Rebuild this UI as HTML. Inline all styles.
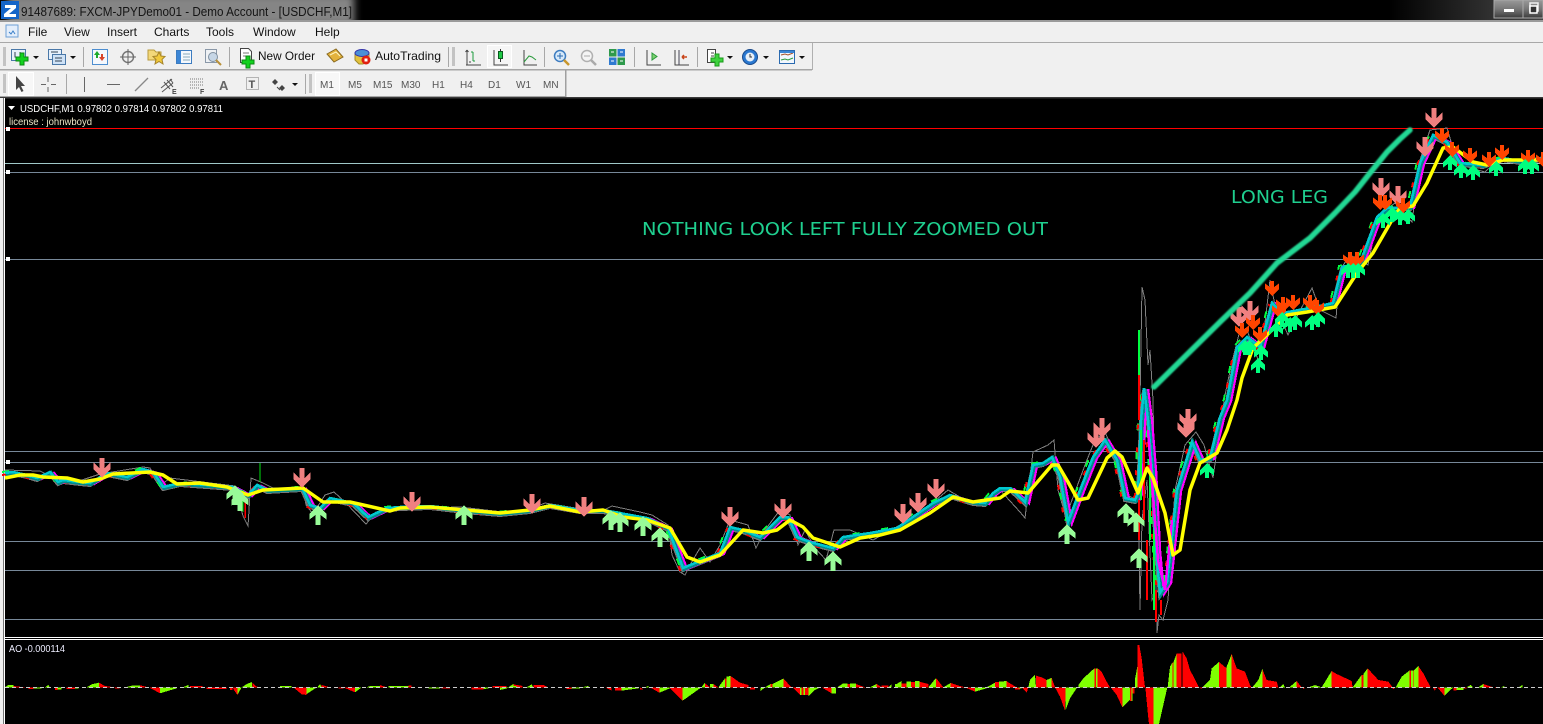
<!DOCTYPE html>
<html><head><meta charset="utf-8"><title>MT4 USDCHF</title>
<style>html,body{margin:0;padding:0;background:#000;overflow:hidden}svg{display:block}
text{font-family:"Liberation Sans",sans-serif}</style></head><body>
<svg xmlns="http://www.w3.org/2000/svg" width="1543" height="724" viewBox="0 0 1543 724">
<defs>
<filter id="b1" x="-20%" y="-100%" width="140%" height="300%"><feGaussianBlur stdDeviation="4"/></filter>
<filter id="b2" x="-5%" y="-5%" width="110%" height="110%"><feGaussianBlur stdDeviation=".8"/></filter>
<linearGradient id="tg" x1="0" x2="1" y1="0" y2="0"><stop offset="0" stop-color="#000"/><stop offset=".9" stop-color="#000"/><stop offset=".97" stop-color="#333"/><stop offset="1" stop-color="#444"/></linearGradient>
<linearGradient id="bg" x1="0" x2="0" y1="0" y2="1"><stop offset="0" stop-color="#9a9a9a"/><stop offset=".5" stop-color="#777"/><stop offset="1" stop-color="#3c3c3c"/></linearGradient>
<path id="pd" fill="#f08080" d="M-2.5 0H2.5V10L8.500 4.500V11L0 20L-8.500 11V4.500L-2.500 10Z"/>
<path id="gu" fill="#98fb98" d="M-2.500 20H2.500V10L8.500 14.500V9L0 0L-8.500 9V14.500L-2.500 10Z"/>
<path id="od" fill="#ff4500" d="M-2 0H2V6L7 2.500V8L0 15L-7 8V2.500L-2 6Z"/>
<path id="su" fill="#00ff7f" d="M-2 15H2V9L7 12.500V7L0 0L-7 7V12.500L-2 9Z"/>
<polyline id="rib" fill="none" points="5,473 13,472 27,475 37,478 50,472 58,482 63,480 80,482 90,483 107,473 127,477 143,469 153,472 163,487 180,483 233,487 248,495 257,485 267,490 302,488 310,505 320,508 330,498 353,503 368,517 387,508 400,507 430,506 465,510 500,513 530,510 550,505 580,510 603,510 647,518 668,528 683,568 695,563 720,553 730,527 743,530 760,537 780,517 788,517 797,537 810,542 833,548 843,537 870,533 897,528 933,503 950,495 973,502 985,503 993,493 1000,488 1010,488 1025,502 1033,465 1043,463 1052,457 1060,477 1068,522 1080,490 1093,457 1105,440 1117,460 1125,498 1135,500 1138,493 1141,420 1144,388 1148,420 1152,470 1156,550 1160,593 1167,582 1177,490 1192,442 1200,460 1210,458 1220,417 1227,400 1237,347 1247,337 1260,347 1272,303 1282,313 1310,308 1333,303 1342,267 1360,263 1377,217 1387,208 1410,207 1420,163 1433,135 1447,142 1460,163 1483,165 1503,158 1520,161 1543,158"/>
</defs>

<!-- title bar -->
<rect width="1543" height="20" fill="url(#tg)"/>
<svg x="0" y="0" width="1543" height="20"><rect x="8" y="-6" width="346" height="32" fill="#858585" filter="url(#b1)"/></svg>
<rect x="1" y="1" width="18" height="18" fill="#1565c8"/>
<path d="M5 5H16V8L9 14H16V17H4V14L11 8H5Z" fill="#fff"/>
<text x="21" y="16" font-size="13" fill="#141414" textLength="331" lengthAdjust="spacingAndGlyphs">91487689: FXCM-JPYDemo01 - Demo Account - [USDCHF,M1]</text>
<rect x="1494" y="0" width="29" height="18" fill="url(#bg)" stroke="#aaa"/>
<rect x="1523" y="0" width="20" height="18" fill="url(#bg)" stroke="#aaa"/>
<rect x="1504" y="9" width="10" height="3" fill="#fff"/>
<rect x="1530" y="3" width="8" height="8" fill="none" stroke="#eee" stroke-width="1.500"/>
<rect x="1530" y="6" width="7" height="7" fill="#333" stroke="#fff" stroke-width="1.500"/>
<rect y="20" width="1543" height="2" fill="#9a9a9a"/>

<!-- menu + toolbars bg -->
<rect y="22" width="1543" height="76" fill="#f0f0f0"/>
<rect y="42" width="1543" height="1" fill="#a8a8a8"/>
<rect y="69" width="812" height="1.500" fill="#a6a6a6"/><rect x="812" y="43" width="1" height="27" fill="#b0b0b0"/>
<rect y="96" width="566" height="1" fill="#a6a6a6"/><rect x="565" y="70" width="1.500" height="27" fill="#a0a0a0"/>

<!-- menu -->
<rect x="6" y="25" width="12" height="12" fill="#e3eefb" stroke="#6d9fd6"/>
<path d="M9 32l2 2 2-3 2 3" fill="none" stroke="#3a7fc8"/>
<g font-size="12" fill="#111">
<text x="28" y="36">File</text><text x="64" y="36">View</text><text x="107" y="36">Insert</text><text x="154" y="36">Charts</text><text x="206" y="36">Tools</text><text x="253" y="36">Window</text><text x="315" y="36">Help</text>
</g>

<!-- grips / separators -->
<g fill="#b8b8b8">
<rect x="3" y="47" width="3" height="19" opacity=".8"/><rect x="3" y="74" width="3" height="19" opacity=".8"/>
<rect x="452" y="47" width="3" height="19" opacity=".8"/><rect x="309" y="74" width="3" height="19" opacity=".8"/>
</g>
<g fill="#a8a8a8">
<rect x="83" y="47" width="1" height="20"/><rect x="229" y="47" width="1" height="20"/><rect x="448" y="47" width="1" height="20"/>
<rect x="544" y="47" width="1" height="20"/><rect x="634" y="47" width="1" height="20"/><rect x="697" y="47" width="1" height="20"/>
<rect x="66" y="74" width="1" height="20"/><rect x="305" y="74" width="1" height="20"/>
</g>

<!-- row1 icons -->
<g stroke-width="1">
<rect x="11.500" y="49.500" width="14" height="11" fill="#e6f0fb" stroke="#4a78a8"/><path d="M15 52v5h3M20 52v3" fill="none" stroke="#345"/>
<path d="M20 53h4v4h4v4h-4v4h-4v-4h-4v-4h4z" fill="#12d21e" stroke="#0a8a12"/>
<path d="M33 56h6l-3 3z" fill="#111"/>
<rect x="48.500" y="49.500" width="13" height="10" fill="#e6f0fb" stroke="#4a78a8"/><rect x="52.500" y="54.500" width="13" height="10" fill="#cfe2f6" stroke="#4a78a8"/><path d="M51 52h7M55 58h7M55 61h7" stroke="#345" fill="none"/>
<path d="M70 56h6l-3 3z" fill="#111"/>
<rect x="92.500" y="49.500" width="15" height="15" fill="#f4f8fd" stroke="#4d8ed0"/><path d="M97 51l3 4h-2v3h-2v-3h-2z" fill="#1caa2c"/><path d="M102 61l-3-4h2v-3h2v3h2z" fill="#d8452a"/>
<circle cx="128" cy="57" r="5.500" fill="none" stroke="#777" stroke-width="1.500"/><path d="M128 49v16M120 57h16" stroke="#666" fill="none"/>
<path d="M148 50h6l2 2h5v8h-13z" fill="#f3d87a" stroke="#b89a3c"/><path d="M159 52l2 4 4 .5-3 3 1 4.500-4-2.500-4 2.500 1-4.500-3-3 4-.5z" fill="#f1c93c" stroke="#a5842a"/>
<rect x="176.500" y="50.500" width="15" height="13" fill="#f4f8fd" stroke="#3c7cc0"/><rect x="177" y="51" width="4" height="12" fill="#3c86d6"/><path d="M183 54h7M183 57h7M183 60h7" stroke="#8ab" fill="none"/>
<rect x="205.500" y="49.500" width="11" height="13" fill="#eef1f4" stroke="#8a98a8"/><circle cx="213" cy="57" r="4.500" fill="#c6d6e6" stroke="#8090a0"/><path d="M216 60l5 5" stroke="#b9913a" stroke-width="2"/>
<path d="M240.500 48.500h8l3 3v11h-11z" fill="#fff" stroke="#444"/><path d="M243 53h6M243 56h6" stroke="#777"/>
<path d="M246 56h4v4h4v4h-4v4h-4v-4h-4v-4h4z" fill="#12d21e" stroke="#0a8a12"/>
<path d="M327 54l9-5 7 8-9 5z" fill="#e3b23c" stroke="#8a6a20"/><path d="M330 55l6-3 4 4" stroke="#fff4c0" fill="none"/>
<path d="M355 53c2-4 12-4 14 0v7l-6 4h-4l-4-4z" fill="#e3c23c" stroke="#a08a2a"/><ellipse cx="362" cy="53" rx="7" ry="3.500" fill="#4a90d6" stroke="#33a"/><circle cx="366" cy="60" r="4.500" fill="#e02010"/><rect x="364.500" y="58.500" width="3" height="3" fill="#fff"/>
</g>
<text x="258" y="60" font-size="12" fill="#111" textLength="57" lengthAdjust="spacingAndGlyphs">New Order</text>
<text x="375" y="60" font-size="12" fill="#111" textLength="66" lengthAdjust="spacingAndGlyphs">AutoTrading</text>

<!-- chart type icons -->
<rect x="487.500" y="45.500" width="24" height="22" fill="#f6f6f6" stroke="#fff"/>
<g fill="none" stroke="#444">
<path d="M467 50v15h14M470 63v-2M467 65h-1"/><path d="M473 52h-2M473 52v9M473 61h2" stroke="#1d9a3c" />
<path d="M467 50l-1.500 2M467 50l1.500 2"/>
<path d="M494 50v15h14"/><rect x="498.500" y="51.500" width="4" height="7" fill="#1ec845" stroke="#0a5a1e"/><path d="M500.500 49v2M500.500 59v3" stroke="#333"/>
<path d="M524 50v15h13"/><path d="M524 62l5-6 3 1 4 3" stroke="#2a9a3c"/>
<circle cx="560" cy="56" r="5.500" fill="#d8eafa" stroke="#3c7cc0" stroke-width="1.500"/><path d="M557 56h6M560 53v6" stroke="#2a6ab0"/><path d="M564 60l5 5" stroke="#c8962c" stroke-width="2.500"/>
<circle cx="587" cy="56" r="5.500" fill="#f4f4f4" stroke="#b0b0b0" stroke-width="1.500"/><path d="M584 56h6" stroke="#aaa"/><path d="M591 60l5 5" stroke="#aaa" stroke-width="2.500"/>
</g>
<rect x="609" y="49" width="7.500" height="7.500" fill="#2f9a4c"/><rect x="617.500" y="49" width="7.500" height="7.500" fill="#2f7ad0"/><rect x="609" y="57.500" width="7.500" height="7.500" fill="#2f7ad0"/><rect x="617.500" y="57.500" width="7.500" height="7.500" fill="#2f9a4c"/>
<path d="M611 52h3M620 52h3M611 61h3M620 61h3" stroke="#fff"/>
<g fill="none" stroke="#444">
<path d="M647 50v15h14"/><path d="M652 53l5 3.500-5 3.500z" fill="#7ed070" stroke="#2a9a3c"/>
<path d="M675 50v15h14"/><path d="M679 50v15" stroke="#445"/><path d="M687 57h-5M682 57l2-2M682 57l2 2" stroke="#c8451a" stroke-width="1.500"/>
<path d="M707.500 49.500h8v13h-8z" fill="#fff"/><path d="M711 53h3M711 56h3"/>
<path d="M716 57h4v4h4v4h-4v4h-4v-4h-4v-4h4z" transform="translate(-1,-3)" fill="#3ed23e" stroke="#1a9a1a"/>
</g>
<path d="M727 56h6l-3 3z" fill="#111"/>
<circle cx="750" cy="57" r="7.500" fill="#2a78d0" stroke="#1a4a8a"/><circle cx="750" cy="57" r="4.500" fill="#e8f0f8"/><path d="M750 54v3h2" stroke="#333" fill="none"/>
<path d="M763 56h6l-3 3z" fill="#111"/>
<rect x="779.500" y="50.500" width="15" height="13" fill="#f2f7fd" stroke="#2a6ab0"/><path d="M781 55l4-1 3 1 5-2" stroke="#a5522a" fill="none"/><path d="M781 60l4-1 3 1 5-2" stroke="#2a9a3c" fill="none"/><rect x="780" y="51" width="14" height="2" fill="#3c86d6"/>
<path d="M799 56h6l-3 3z" fill="#111"/>

<!-- row 2 -->
<rect x="8.500" y="72.500" width="25" height="23" fill="#f7f7f7" stroke="#fff"/>
<path d="M16 76v14l3-3 2.500 5 2-1-2.500-5h4z" fill="#444"/>
<path d="M48 77v5M48 87v5M41 84.500h5M51 84.500h5" stroke="#666" fill="none"/>
<path d="M84.500 77v15" stroke="#666"/><path d="M107 84.500h13" stroke="#666"/><path d="M135 91l13-13" stroke="#888" stroke-width="1.300"/>
<path d="M161 88l11-9M162 92l11-9M164 82l6 7M167 80l6 7M170 79l3 4" stroke="#555" fill="none"/>
<text x="172" y="94" font-size="7" font-weight="bold" fill="#444">E</text>
<path d="M190 79h14M190 82h14M190 85h14M190 88h10" stroke="#777" stroke-dasharray="1 1" fill="none"/>
<text x="200" y="94" font-size="7" font-weight="bold" fill="#444">F</text>
<text x="219" y="90" font-size="13" font-weight="bold" fill="#666">A</text>
<rect x="246.500" y="77.500" width="12" height="12" fill="none" stroke="#777" stroke-dasharray="1 1"/>
<text x="248.500" y="88" font-size="11" font-weight="bold" fill="#555">T</text>
<path d="M275 79l3 3-3 3-3-3zM282 85l3 3-3 3-3-3z" fill="#444"/><path d="M277 87l3 3" stroke="#444"/>
<path d="M292 83h6l-3 3z" fill="#111"/>
<rect x="315.500" y="72.500" width="24" height="23" fill="#f7f7f7" stroke="#fff"/>
<g font-size="10" fill="#555">
<text x="320" y="88">M1</text><text x="348" y="88">M5</text><text x="373" y="88">M15</text><text x="401" y="88">M30</text><text x="432" y="88">H1</text><text x="460" y="88">H4</text><text x="488" y="88">D1</text><text x="516" y="88">W1</text><text x="543" y="88">MN</text>
</g>

<!-- chart frame -->
<rect x="0" y="97" width="1543" height="1.500" fill="#3a3a3a"/>
<rect x="0" y="98" width="5" height="626" fill="#f0f0f0"/>
<rect x="3" y="98" width="1" height="626" fill="#777"/>
<rect x="4" y="98" width="1" height="626" fill="#fff"/>
<rect x="5" y="99" width="1538" height="538" fill="#000"/>
<rect x="5" y="640" width="1538" height="84" fill="#000"/>
<rect x="4" y="637" width="1539" height="1" fill="#fff"/>
<rect x="4" y="639" width="1539" height="1" fill="#fff"/>

<g shape-rendering="crispEdges">
<path d="M5 172.500H1543M5 259.500H1543M5 451.500H1543M5 462.500H1543M5 541.500H1543M5 570.500H1543M5 619.500H1543" stroke="#778899" fill="none"/>
<path d="M5 163.500H1543" stroke="#9fc8c8" fill="none"/>
<path d="M5 128.500H1543" stroke="#ff0000" fill="none"/>
<rect x="6" y="127" width="4" height="4" fill="#fff"/><rect x="6" y="170" width="4" height="4" fill="#fff"/><rect x="6" y="257" width="4" height="4" fill="#fff"/><rect x="6" y="460" width="4" height="4" fill="#fff"/>
</g>

<!-- price: thin grey envelope -->
<polyline shape-rendering="crispEdges" fill="none" stroke="#808080" points="5,470 40,471 58,480 70,484 100,474 143,467 150,468 160,486 170,478 235,486 243,516 248,526 251,478 263,483 273,488 303,488 306,505 313,514 325,495 334,492 345,502 366,524 376,512 390,509 460,507 520,514 545,503 600,512 612,506 640,512 652,515 668,525 672,555 680,572 685,575 690,565 700,548 710,562 720,545 730,520 748,525 756,548 765,530 780,510 790,515 798,545 805,530 815,548 826,560 834,530 850,530 873,540 900,525 930,505 948,490 960,497 975,505 1000,490 1020,512 1025,518 1033,452 1048,445 1054,440 1058,490 1066,517 1072,500 1085,465 1095,440 1105,432 1115,455 1126,495 1138,500 1140,400 1142,287 1145,300 1148,365 1150,350 1153,400 1155,520 1157,633 1159,615 1163,620 1168,600 1175,490 1185,445 1196,432 1204,445 1213,478 1217,450 1225,395 1232,362 1240,330 1247,330 1260,365 1270,280 1275,305 1288,335 1295,320 1312,288 1320,310 1336,318 1340,270 1350,255 1368,265 1378,215 1395,203 1412,222 1420,160 1430,130 1447,128 1455,155 1470,168 1485,172 1500,158 1525,165 1543,156"/>
<polyline shape-rendering="crispEdges" fill="none" stroke="#808080" points="1135,500 1138,480 1140,610 1142,520 1147,480 1152,600 1158,590"/>

<!-- ribbon -->
<g shape-rendering="crispEdges">
<use href="#rib" transform="translate(0,2)" stroke="#777" stroke-width="4"/>
<use href="#rib" transform="translate(-3,-1)" stroke="#00ff40" stroke-width="2" stroke-dasharray="7 22"/>
<use href="#rib" transform="translate(-3,2)" stroke="#ff0000" stroke-width="2" stroke-dasharray="5 18"/>
<use href="#rib" transform="translate(4,1)" stroke="#ff00ff" stroke-width="2.500"/>
<use href="#rib" transform="translate(1,1)" stroke="#008b8b" stroke-width="4"/>
<use href="#rib" stroke="#00c8d0" stroke-width="2.500"/>
<path d="M1139 375V420M1139 500V540M1156 590V622M1147 540V600M1144 440V520M1161 600V615" stroke="#ff0000" stroke-width="2" fill="none"/>
<path d="M1139 330V375M1141 430V500M1154 530V610M1150 470V540" stroke="#00ff40" stroke-width="2" fill="none"/>
<path d="M1148 430L1158 560L1165 590L1172 520" stroke="#ff00ff" stroke-width="2.500" fill="none"/>
<path d="M260 463V482M243 490V512" stroke="#00e010" fill="none"/>
<path d="M245 500V518" stroke="#ff0000" stroke-width="1.500" fill="none"/>
</g>

<!-- yellow MA -->
<polyline fill="none" stroke="#ffff00" stroke-width="3.500" stroke-linejoin="round" points="5,478 20,475 33,475 43,477 67,478 83,482 100,479 113,474 150,472 163,475 177,484 200,483 227,487 248,495 263,490 303,488 323,502 350,502 390,511 400,508 430,507 465,510 500,513 530,510 550,506 580,512 603,510 623,517 647,520 670,528 687,557 700,562 720,555 743,530 763,533 777,530 790,520 803,527 813,538 840,547 860,538 880,535 900,530 930,513 953,497 973,502 1000,498 1010,491 1028,493 1052,465 1058,465 1068,482 1078,500 1088,498 1107,458 1115,451 1122,457 1138,493 1147,468 1153,478 1165,513 1173,555 1180,550 1190,490 1200,463 1217,453 1227,430 1237,400 1242,378 1253,348 1270,332 1287,315 1307,312 1335,307 1357,273 1373,253 1392,220 1400,208 1413,206 1427,183 1443,148 1453,147 1473,162 1487,165 1503,160 1543,160"/>

<!-- arrows -->
<g shape-rendering="crispEdges">
<use href="#pd" x="102" y="458"/><use href="#pd" x="302" y="468"/><use href="#pd" x="412" y="492"/><use href="#pd" x="532" y="494"/><use href="#pd" x="584" y="497"/><use href="#pd" x="730" y="507"/><use href="#pd" x="783" y="499"/><use href="#pd" x="903" y="504"/><use href="#pd" x="918" y="493"/><use href="#pd" x="936" y="479"/><use href="#pd" x="1096" y="428"/><use href="#pd" x="1102" y="418"/><use href="#pd" x="1186" y="418"/><use href="#pd" x="1188" y="409"/><use href="#pd" x="1239" y="307"/><use href="#pd" x="1250" y="301"/><use href="#pd" x="1381" y="178"/><use href="#pd" x="1398" y="186"/><use href="#pd" x="1425" y="137"/><use href="#pd" x="1434" y="108"/>
<use href="#gu" x="235" y="485"/><use href="#gu" x="240" y="491"/><use href="#gu" x="318" y="505"/><use href="#gu" x="464" y="505"/><use href="#gu" x="611" y="510"/><use href="#gu" x="620" y="512"/><use href="#gu" x="643" y="516"/><use href="#gu" x="660" y="527"/><use href="#gu" x="809" y="541"/><use href="#gu" x="833" y="551"/><use href="#gu" x="1067" y="524"/><use href="#gu" x="1126" y="503"/><use href="#gu" x="1136" y="512"/><use href="#gu" x="1139" y="548"/>
<use href="#od" x="1272" y="281"/><use href="#od" x="1242" y="323"/><use href="#od" x="1253" y="315"/><use href="#od" x="1260" y="327"/><use href="#od" x="1279" y="303"/><use href="#od" x="1283" y="297"/><use href="#od" x="1293" y="295"/><use href="#od" x="1310" y="295"/><use href="#od" x="1317" y="300"/><use href="#od" x="1350" y="252"/><use href="#od" x="1357" y="252"/><use href="#od" x="1380" y="195"/><use href="#od" x="1385" y="195"/><use href="#od" x="1403" y="198"/><use href="#od" x="1442" y="128"/><use href="#od" x="1452" y="142"/><use href="#od" x="1470" y="148"/><use href="#od" x="1489" y="152"/><use href="#od" x="1502" y="145"/><use href="#od" x="1528" y="150"/><use href="#od" x="1543" y="152"/>
<use href="#su" x="1207" y="463"/><use href="#su" x="1258" y="358"/><use href="#su" x="1245" y="340"/><use href="#su" x="1249" y="340"/><use href="#su" x="1261" y="345"/><use href="#su" x="1276" y="322"/><use href="#su" x="1282" y="312"/><use href="#su" x="1290" y="317"/><use href="#su" x="1295" y="315"/><use href="#su" x="1312" y="315"/><use href="#su" x="1318" y="312"/><use href="#su" x="1348" y="263"/><use href="#su" x="1353" y="263"/><use href="#su" x="1358" y="263"/><use href="#su" x="1383" y="213"/><use href="#su" x="1392" y="207"/><use href="#su" x="1400" y="210"/><use href="#su" x="1408" y="209"/><use href="#su" x="1450" y="155"/><use href="#su" x="1461" y="163"/><use href="#su" x="1473" y="165"/><use href="#su" x="1496" y="161"/><use href="#su" x="1525" y="159"/><use href="#su" x="1532" y="159"/>
</g>

<!-- drawn line & labels -->
<polyline fill="none" stroke="#22d894" stroke-width="5.500" stroke-linecap="round" stroke-linejoin="round" filter="url(#b2)" points="1154,387 1220,322 1250,293 1277,263 1310,238 1335,213 1355,192 1370,173 1387,152 1400,139 1410,130"/>
<text x="642" y="235" font-size="18" style="font-family:'DejaVu Sans',sans-serif" fill="#1fcf8f" textLength="406" lengthAdjust="spacingAndGlyphs">NOTHING LOOK LEFT FULLY ZOOMED OUT</text>
<text x="1231" y="203" font-size="18" style="font-family:'DejaVu Sans',sans-serif" fill="#1fcf8f" textLength="97" lengthAdjust="spacingAndGlyphs">LONG LEG</text>
<path d="M8 106h7l-3.500 4z" fill="#fff"/>
<text x="20" y="112" font-size="10" fill="#fff" textLength="203" lengthAdjust="spacingAndGlyphs">USDCHF,M1  0.97802 0.97814 0.97802 0.97811</text>
<text x="9" y="125" font-size="10" fill="#eee8c8" textLength="83" lengthAdjust="spacingAndGlyphs">license : johnwboyd</text>
<text x="9" y="652" font-size="10" fill="#eef" textLength="56" lengthAdjust="spacingAndGlyphs">AO -0.000114</text>

<!-- AO histogram -->
<g shape-rendering="crispEdges">
<g transform="translate(0,630) scale(.33333)">
<path fill="#7fff00" d="M14 172L25 165H40V172ZM100 172H125V176H100ZM135 172L145 165L150 172ZM172 172H185V178H172ZM225 172H235V176H225ZM260 172L275 163L297 158V172ZM375 172L400 166H420V172ZM480 172V190L530 175V172ZM548 172L565 165V172ZM712 172V195L725 172ZM725 172L740 162L755 156L757 172ZM840 172H875V168H840ZM920 172V192L950 172ZM952 172L960 162L965 172ZM1065 172V187L1085 172ZM1100 172L1110 168H1140V172ZM1165 172V168H1225V172ZM1285 172H1320V176H1285ZM1450 172V178L1480 172ZM1525 172L1540 162V172Z"/>
<path fill="#ff0000" d="M40 168L75 172H40ZM85 172H100V177H85ZM165 172H172V180H165ZM200 172H225V177H200ZM297 158L315 168L345 172H297ZM345 172H358V176H345ZM420 166L445 172H420ZM447 172L480 190V172ZM570 172V168H608V172ZM620 172H680V177H620ZM690 172H697V180H690ZM697 172L712 195V172ZM757 158L770 170L785 172H757ZM880 172L905 193L920 195V172ZM965 165L990 172H965ZM1015 172H1030V176H1015ZM1030 172L1065 187V172ZM1140 165L1160 172H1140ZM1225 166H1235V172H1225ZM1325 172H1350V176H1325ZM1415 172H1450V179H1415ZM1478 172V168H1520V172ZM1540 163L1568 168V172H1540Z"/>
</g>
<g transform="translate(500,660) scale(.33333)">
<path fill="#7fff00" d="M0 82V90L10 88L30 82ZM35 82V78H50V82ZM80 82L95 73L100 82ZM215 82H240V86H215ZM245 82L265 78V82ZM365 82V92L415 85V82ZM435 82L445 78V82ZM478 82V98L510 85V82ZM548 82V122L600 85L604 82ZM604 82L615 68V82ZM630 82V72H640V82ZM655 82L675 55V82ZM680 82V50L692 48V82ZM782 82V93L795 82ZM795 82L812 72V82ZM818 82V72L850 56V82ZM900 82V105H905V82ZM910 82V105H915V82ZM925 82V110L945 90L960 82ZM995 82V100H1008V82ZM1012 82L1030 70H1043V82ZM1050 82V70H1068V82ZM1110 82L1130 72V82ZM1165 82L1175 72V82ZM1185 82V72H1190L1205 63V82ZM1220 82V65H1233V82ZM1245 82V63H1258V82ZM1285 82L1308 54V82ZM1330 82L1352 69V82ZM1425 82V95L1460 85V82ZM1460 82L1485 68V82ZM1497 82V64H1520V82Z"/>
<path fill="#ff0000" d="M100 75H130L145 82H100ZM200 82H215V87H200ZM315 82L335 92V82ZM345 82H365V92H345ZM420 82V88H430ZM450 82L478 98V82ZM507 82L548 122V82ZM615 70L630 82H615ZM640 72L655 82H640ZM675 55H680V82H675ZM692 48L720 68L745 75V82H692ZM750 82H765V88H750ZM812 72H818V82H812ZM850 56L875 82H850ZM878 82L900 105V82ZM905 82V105H910V82ZM915 82V105H925V82ZM965 82L995 100V82ZM1043 72H1050V82H1043ZM1068 72L1095 82H1068ZM1130 72L1145 82H1130ZM1145 76H1165V82H1145ZM1205 70H1220V82H1205ZM1233 66H1245V82H1233ZM1258 65L1285 72V82H1258ZM1308 54L1330 82H1308ZM1352 69L1380 78L1395 82H1352ZM1395 82L1425 95V82ZM1485 66H1497V82H1485ZM1520 64L1550 82H1520ZM1545 82H1560V89H1545Z"/>
</g>
<g transform="translate(1000,630) scale(.33333)">
<path fill="#7fff00" d="M0 172V155L20 153V172ZM55 172H65V175H55ZM85 172L90 150L105 135L108 172ZM140 172V150L155 143V172ZM197 172V240L210 205L232 172ZM235 165L250 145L283 115V172H235ZM288 115H293V172H288ZM367 172V232L390 210V172ZM395 172V213H398V172ZM405 172V147L412 110V172ZM460 172V282H477L490 225L502 172ZM503 172L510 110L517 98V172ZM520 98L530 70V172H520ZM608 172L630 150L635 115L657 96V172ZM680 172V110L695 72V172ZM718 120H721V172H718ZM757 172L775 150L787 117V172ZM808 155H811V172H808ZM818 155H821V172H818ZM840 172L850 162L855 172ZM868 172L890 153V172ZM925 172L945 165L965 172ZM965 172L995 123V172ZM1058 172L1085 135V172ZM1090 132L1103 115V172H1090ZM1150 155H1153V172H1150ZM1187 172L1205 140L1228 122V172ZM1233 122H1240V172H1233ZM1242 120L1255 108V172H1242ZM1333 172V197L1360 172ZM1370 172H1390V180H1370ZM1400 172L1412 165L1420 172ZM1435 172L1450 162V172ZM1505 172L1510 168L1515 172ZM1555 172L1568 165V172Z"/>
<path fill="#ff0000" d="M20 153L40 172H20ZM45 172H55V178H45ZM65 172L80 188L85 172ZM108 137L125 142L140 150V172H108ZM155 143L165 172H155ZM165 172L180 200L195 242L197 172ZM283 115H288V172H283ZM293 115L305 125L320 155L330 172H293ZM332 172L350 195L367 232V172ZM390 172V213H395V172ZM398 172V190H403V172ZM412 172V45H418L425 85L435 172ZM436 172L445 265L447 282H460V172ZM517 98H520V172H517ZM530 172V70H545V172ZM548 65L560 85L570 120L585 148L597 172H548ZM595 172L605 176L610 172ZM657 96L680 115V172H657ZM695 72L710 115L735 125L750 165L755 172H695ZM787 117L800 150L830 155L835 172H787ZM890 153L905 172H890ZM905 172L912 177L915 172ZM995 123L1010 132L1055 153L1058 172H995ZM1085 135H1090V172H1085ZM1103 115L1135 150L1165 155L1178 172H1103ZM1175 172L1180 178L1187 172ZM1228 122H1233V172H1228ZM1240 122H1242V172H1240ZM1255 108L1270 130L1292 172H1255ZM1298 172L1305 182L1308 172ZM1312 172L1333 197V172ZM1360 172H1370V182H1360ZM1390 172H1400V176H1390ZM1450 162L1480 172H1450ZM1485 172H1495V174H1485Z"/>
</g>
<path d="M5 687.500H1543" stroke="#ccc" stroke-dasharray="4 3" fill="none"/>
</g>
</svg>
</body></html>
